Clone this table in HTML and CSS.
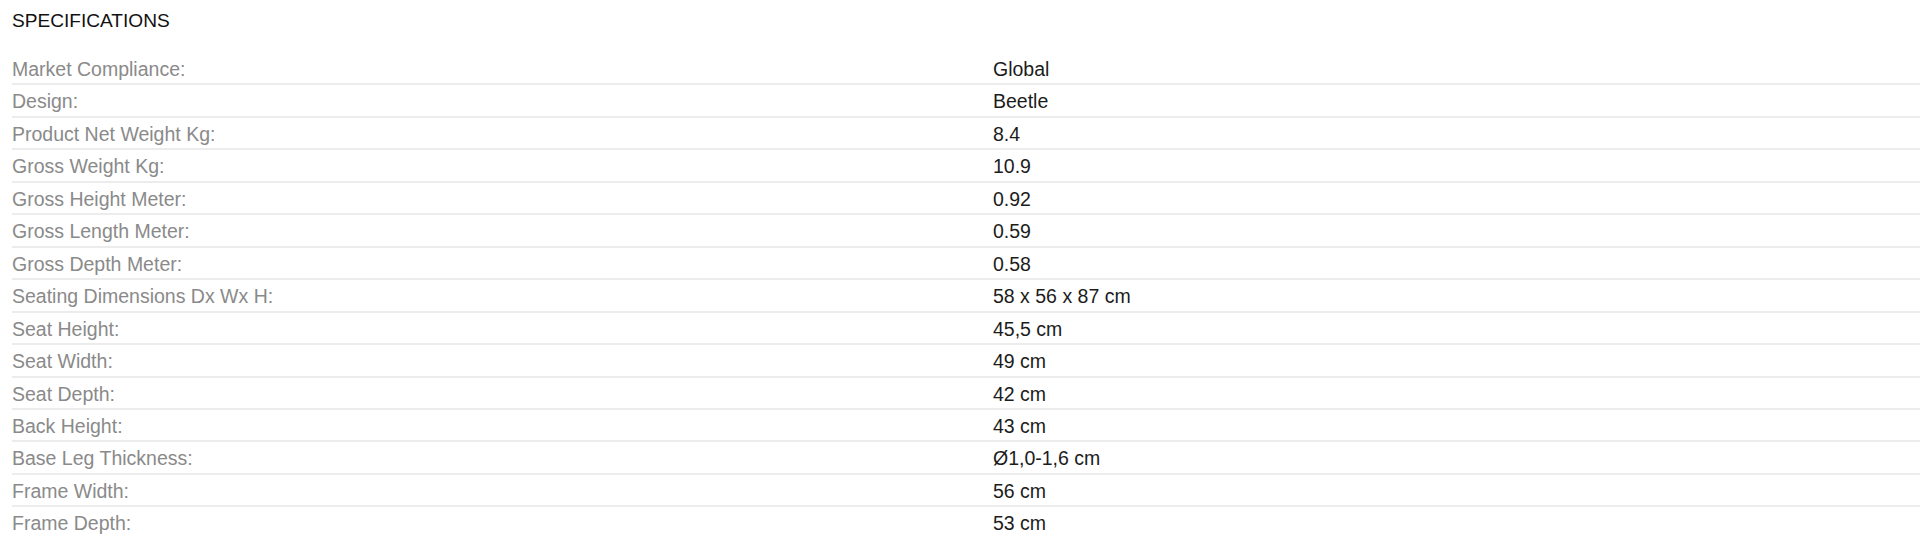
FILE: index.html
```html
<!DOCTYPE html>
<html lang="en">
<head>
<meta charset="utf-8">
<title>Specifications</title>
<link rel="stylesheet" href="styles.css">
</head>
<body>
<section class="specs">
  <h2 class="specs-title">SPECIFICATIONS</h2>
  <dl class="specs-list">
    <div class="spec-row"><dt>Market Compliance:</dt><dd>Global</dd></div>
    <div class="spec-row"><dt>Design:</dt><dd>Beetle</dd></div>
    <div class="spec-row"><dt>Product Net Weight Kg:</dt><dd>8.4</dd></div>
    <div class="spec-row"><dt>Gross Weight Kg:</dt><dd>10.9</dd></div>
    <div class="spec-row"><dt>Gross Height Meter:</dt><dd>0.92</dd></div>
    <div class="spec-row"><dt>Gross Length Meter:</dt><dd>0.59</dd></div>
    <div class="spec-row"><dt>Gross Depth Meter:</dt><dd>0.58</dd></div>
    <div class="spec-row"><dt>Seating Dimensions Dx Wx H:</dt><dd>58 x 56 x 87 cm</dd></div>
    <div class="spec-row"><dt>Seat Height:</dt><dd>45,5 cm</dd></div>
    <div class="spec-row"><dt>Seat Width:</dt><dd>49 cm</dd></div>
    <div class="spec-row"><dt>Seat Depth:</dt><dd>42 cm</dd></div>
    <div class="spec-row"><dt>Back Height:</dt><dd>43 cm</dd></div>
    <div class="spec-row"><dt>Base Leg Thickness:</dt><dd>Ø1,0-1,6 cm</dd></div>
    <div class="spec-row"><dt>Frame Width:</dt><dd>56 cm</dd></div>
    <div class="spec-row"><dt>Frame Depth:</dt><dd>53 cm</dd></div>
  </dl>
</section>
</body>
</html>
```

FILE: styles.css
```css
html, body {
  margin: 0;
  padding: 0;
  background: #ffffff;
}

body {
  font-family: "Liberation Sans", Arial, Helvetica, sans-serif;
  color: #1a1a1a;
}

.specs {
  padding: 10px 0 0 12px;
}

.specs-title {
  margin: 0 0 21px 0;
  font-size: 19.1px;
  line-height: 22px;
  font-weight: 400;
  color: #111111;
}

.specs-list {
  margin: 0;
  padding: 0;
}

.spec-row {
  display: grid;
  grid-template-columns: 981px 1fr;
  padding: 6px 0 3px 0;
  border-bottom: 2px solid #ececec;
  font-size: 19.5px;
  line-height: 21.45px;
}

.spec-row:last-child {
  border-bottom: none;
}

.spec-row dt {
  margin: 0;
  color: #8a8a8a;
}

.spec-row dd {
  margin: 0;
  color: #1c1c1c;
}
```
